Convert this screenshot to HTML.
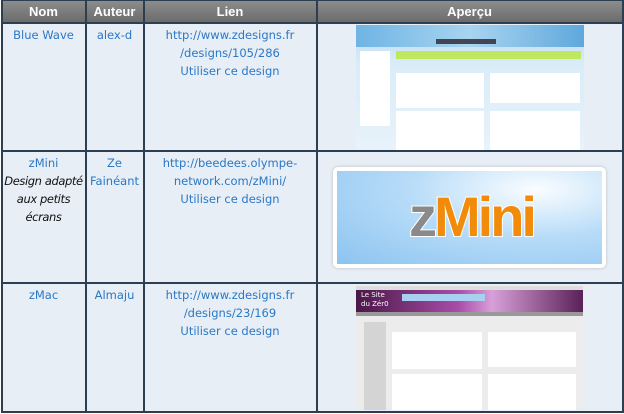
<!DOCTYPE html>
<html><head><meta charset="utf-8"><style>
body{margin:0;width:624px;height:414px;background:#fff;position:relative;overflow:hidden;font-family:"DejaVu Sans","Liberation Sans",sans-serif;font-size:11.5px}
.v{position:absolute;background:#2c3e52;width:2px;top:0;height:413px}
.h{position:absolute;background:#2c3e52;height:2px;left:1px;width:623px}
.hd{position:absolute;left:1px;top:0;width:622px;height:23px;background:linear-gradient(#8e8e8e,#6a6a6a)}
.bg{position:absolute;left:1px;top:23px;width:622px;height:389px;background:#e7eef5}
.c{position:absolute;text-align:center;line-height:18px;color:#2a78c8;white-space:nowrap}
.th{position:absolute;top:0;height:23px;line-height:23px;text-align:center;color:#fff;font-weight:bold;font-size:13px;font-family:"Liberation Sans",sans-serif}
i{color:#111;letter-spacing:-0.4px}
</style></head><body>
<div class="bg"></div><div class="hd"></div>
<div class="th" style="left:2px;width:83px">Nom</div>
<div class="th" style="left:86px;width:57px">Auteur</div>
<div class="th" style="left:144px;width:172px">Lien</div>
<div class="th" style="left:317px;width:305px">Aperçu</div>
<div class="v" style="left:1px"></div><div class="v" style="left:85px"></div><div class="v" style="left:143px"></div><div class="v" style="left:316px"></div><div class="v" style="left:622px"></div>
<div class="h" style="top:0;height:1px"></div>
<div class="h" style="top:22px"></div><div class="h" style="top:150px"></div><div class="h" style="top:282px"></div><div class="h" style="top:411px"></div>

<div class="c" style="left:2px;width:83px;top:26px">Blue Wave</div>
<div class="c" style="left:86px;width:57px;top:26px">alex-d</div>
<div class="c" style="left:144px;width:172px;top:26px">http://www.zdesigns.fr<br>/designs/105/286<br>Utiliser ce design</div>
<div style="position:absolute;left:356px;top:25px;width:228px;height:125px;background:linear-gradient(#b8d8f0,#d8ecf8 30%,#e8f2fa)">
<div style="position:absolute;left:0;top:0;width:228px;height:22px;background:linear-gradient(90deg,#6fb4e4,#a8d4f0,#5fa8dc)"></div>
<div style="position:absolute;left:80px;top:14px;width:60px;height:5px;background:#445"></div>
<div style="position:absolute;left:40px;top:26px;width:185px;height:8px;background:#bfe860"></div>
<div style="position:absolute;left:40px;top:48px;width:88px;height:35px;background:#fff"></div>
<div style="position:absolute;left:134px;top:48px;width:90px;height:30px;background:#fff"></div>
<div style="position:absolute;left:40px;top:86px;width:88px;height:39px;background:#fff"></div>
<div style="position:absolute;left:134px;top:86px;width:90px;height:39px;background:#fff"></div>
<div style="position:absolute;left:4px;top:26px;width:30px;height:75px;background:#fff"></div>
</div>

<div class="c" style="left:2px;width:83px;top:154px">zMini<br><i>Design adapté<br>aux petits<br>écrans</i></div>
<div class="c" style="left:86px;width:57px;top:154px">Ze<br>Fainéant</div>
<div class="c" style="left:144px;width:172px;top:154px">http://beedees.olympe-<br>network.com/zMini/<br>Utiliser ce design</div>
<div style="position:absolute;left:333px;top:167px;width:273px;height:101px;background:#fff;border-radius:5px;box-shadow:0 0 3px #bbb">
<div style="position:absolute;left:4px;top:4px;width:265px;height:93px;background:radial-gradient(ellipse at 75% 20%,#fafdff,#b8dcf8 45%,#8cc4f0)">
<div style="position:absolute;left:72px;top:16px;font:bold 56px 'Liberation Sans',sans-serif;letter-spacing:-3px;line-height:60px"><span style="color:#8a8a8a;-webkit-text-stroke:2px #fff;paint-order:stroke">z</span><span style="color:#f28a0a;-webkit-text-stroke:2px #fff;paint-order:stroke">Mini</span></div>
</div></div>

<div class="c" style="left:2px;width:83px;top:286px">zMac</div>
<div class="c" style="left:86px;width:57px;top:286px">Almaju</div>
<div class="c" style="left:144px;width:172px;top:286px">http://www.zdesigns.fr<br>/designs/23/169<br>Utiliser ce design</div>
<div style="position:absolute;left:356px;top:286px;width:227px;height:124px;background:#ececec">
<div style="position:absolute;left:0;top:0;width:227px;height:4px;background:#ddd"></div>
<div style="position:absolute;left:0;top:4px;width:227px;height:22px;background:linear-gradient(90deg,#4a1848,#a84ca8 45%,#d8a0d8 60%,#5a2058)"></div>
<div style="position:absolute;left:5px;top:5px;color:#fff;font-size:7px;line-height:9px">Le Site<br>du Zér0</div>
<div style="position:absolute;left:46px;top:8px;width:83px;height:7px;background:#a8d0f0"></div>
<div style="position:absolute;left:0;top:26px;width:227px;height:4px;background:#999"></div>
<div style="position:absolute;left:8px;top:36px;width:22px;height:88px;background:#d4d4d4"></div>
<div style="position:absolute;left:36px;top:46px;width:90px;height:37px;background:#fff"></div>
<div style="position:absolute;left:132px;top:46px;width:88px;height:35px;background:#fff"></div>
<div style="position:absolute;left:36px;top:88px;width:90px;height:36px;background:#fff"></div>
<div style="position:absolute;left:132px;top:88px;width:88px;height:36px;background:#fff"></div>
</div>
</body></html>
